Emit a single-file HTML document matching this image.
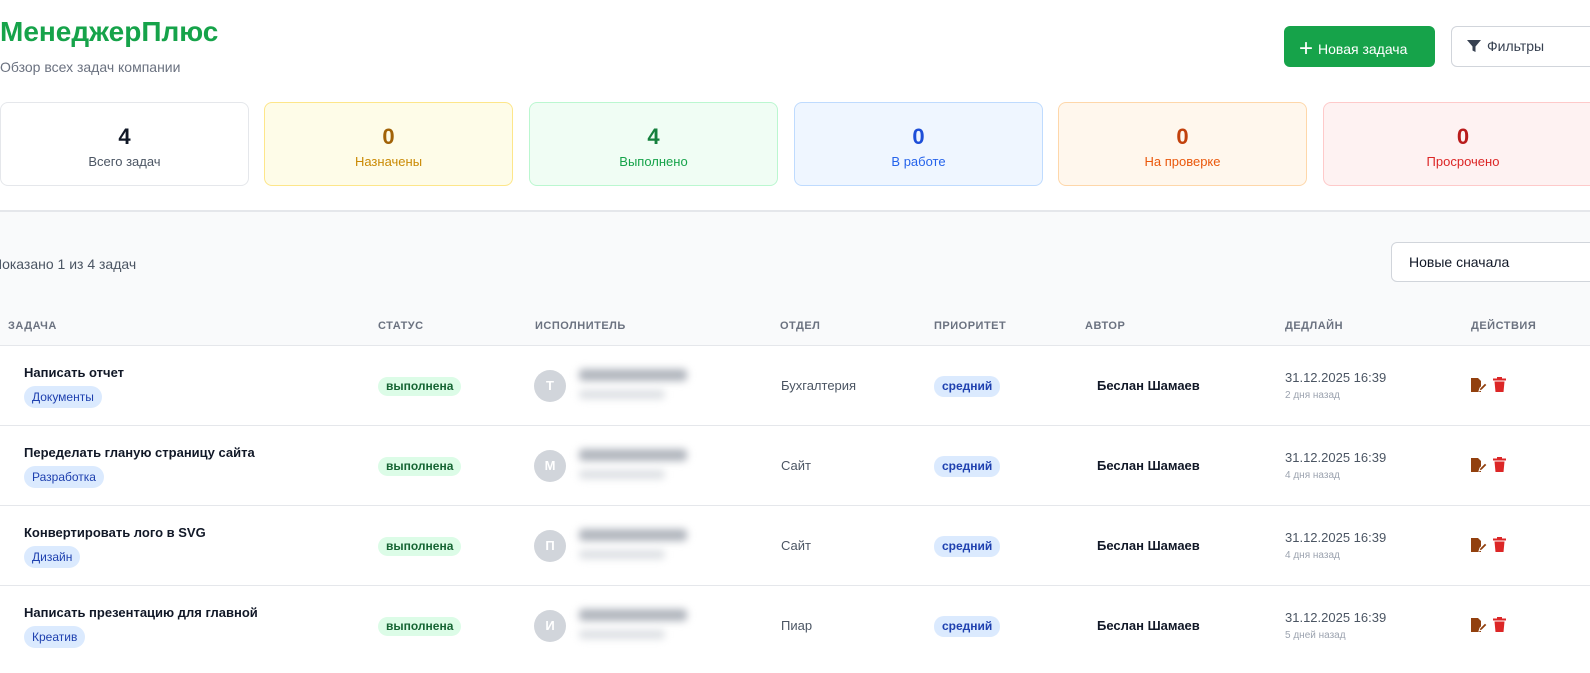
<!DOCTYPE html>
<html><head><meta charset="utf-8"><style>
*{box-sizing:border-box;margin:0;padding:0}
body{width:1590px;height:673px;overflow:hidden;background:#fff;font-family:"Liberation Sans","Noto Sans CJK SC",sans-serif;position:relative;color:#111827}
.a{position:absolute;white-space:nowrap}
.card{position:absolute;top:102px;width:249px;height:84px;border:1px solid #e5e7eb;border-radius:8px;text-align:center}
.card b{display:block;margin-top:21px;font-size:22px;line-height:26px}
.card span{display:block;font-size:13px;margin-top:4px}
.th{position:absolute;top:320px;font-size:11px;font-weight:bold;color:#6b7280;letter-spacing:.5px}
.pill{position:absolute;height:19px;line-height:19px;border-radius:10px;font-size:12px;font-weight:bold;padding:0 8px}
.tag{position:absolute;height:22px;line-height:22px;border-radius:11px;font-size:12px;padding:0 8px;background:#dbeafe;color:#1e40af}
</style></head><body>
<div class="a" style="left:0;top:16px;font-size:28px;font-weight:bold;color:#16a34a">МенеджерПлюс</div>
<div class="a" style="left:0;top:59px;font-size:14px;color:#6b7280">Обзор всех задач компании</div>
<div class="a" style="left:1284px;top:26px;width:151px;height:41px;background:#16a34a;border-radius:6px;color:#fff;font-size:14px;line-height:41px;padding-left:15px"><span style="font-size:24px;position:relative;top:2px;margin-right:5px">+</span>Новая задача</div>
<div class="a" style="left:1451px;top:26px;width:150px;height:41px;border:1px solid #d1d5db;border-radius:6px;font-size:14px;line-height:39px;padding-left:15px;color:#374151"><svg width="14" height="14" viewBox="0 0 14 14" style="vertical-align:-2px;margin-right:6px"><path d="M0 1h14L8.5 7.5V13l-3-1.5V7.5z" fill="#374151"/></svg>Фильтры</div>

<div class="card" style="left:0"><b style="color:#111827">4</b><span style="color:#4b5563">Всего задач</span></div>
<div class="card" style="left:264px;background:#fefce8;border-color:#fde68a"><b style="color:#a16207">0</b><span style="color:#ca8a04">Назначены</span></div>
<div class="card" style="left:529px;background:#f0fdf4;border-color:#bbf7d0"><b style="color:#15803d">4</b><span style="color:#16a34a">Выполнено</span></div>
<div class="card" style="left:794px;background:#eff6ff;border-color:#bfdbfe"><b style="color:#1d4ed8">0</b><span style="color:#2563eb">В работе</span></div>
<div class="card" style="left:1058px;background:#fff7ed;border-color:#fed7aa"><b style="color:#c2410c">0</b><span style="color:#ea580c">На проверке</span></div>
<div class="card" style="left:1323px;background:#fef2f2;border-color:#fecaca;width:280px"><b style="color:#b91c1c">0</b><span style="color:#dc2626">Просрочено</span></div>

<div class="a" style="left:0;top:210px;width:1590px;height:136px;background:#f9fafb;border-top:2px solid #e5e7eb;border-bottom:1px solid #e5e7eb"></div>
<div class="a" style="left:-8px;top:256px;font-size:14px;color:#4b5563">Показано 1 из 4 задач</div>
<div class="a" style="left:1391px;top:242px;width:220px;height:40px;background:#fff;border:1px solid #d1d5db;border-radius:6px;font-size:14px;line-height:38px;padding-left:17px">Новые сначала</div>

<div class="th" style="left:8px">ЗАДАЧА</div>
<div class="th" style="left:378px">СТАТУС</div>
<div class="th" style="left:535px">ИСПОЛНИТЕЛЬ</div>
<div class="th" style="left:780px">ОТДЕЛ</div>
<div class="th" style="left:934px">ПРИОРИТЕТ</div>
<div class="th" style="left:1085px">АВТОР</div>
<div class="th" style="left:1285px">ДЕДЛАЙН</div>
<div class="th" style="left:1471px">ДЕЙСТВИЯ</div>

<div id="rows"></div>
<script>
var d=[["Написать отчет","Документы","Т","Бухгалтерия","2 дня назад"],["Переделать гланую страницу сайта","Разработка","М","Сайт","4 дня назад"],["Конвертировать лого в SVG","Дизайн","П","Сайт","4 дня назад"],["Написать презентацию для главной","Креатив","И","Пиар","5 дней назад"]];
var h="";
d.forEach(function(r,i){var t=345+i*80;
if(i>0)h+='<div class="a" style="left:0;top:'+t+'px;width:1590px;height:1px;background:#e5e7eb"></div>';
h+='<div class="a" style="left:24px;top:'+(t+20)+'px;font-size:13px;font-weight:bold">'+r[0]+'</div>';
h+='<div class="tag" style="left:24px;top:'+(t+41)+'px">'+r[1]+'</div>';
h+='<div class="pill" style="left:378px;top:'+(t+32)+'px;background:#dcfce7;color:#166534">выполнена</div>';
h+='<div class="a" style="left:534px;top:'+(t+25)+'px;width:32px;height:32px;border-radius:50%;background:#d1d5db;color:#fff;font-size:13px;text-align:center;line-height:32px;font-weight:bold">'+r[2]+'</div>';
h+='<div class="a" style="left:579px;top:'+(t+24)+'px;width:108px;height:12px;background:#b0b5bd;filter:blur(4px);border-radius:4px"></div>';
h+='<div class="a" style="left:579px;top:'+(t+45)+'px;width:86px;height:9px;background:#dcdfe3;filter:blur(4px);border-radius:4px"></div>';
h+='<div class="a" style="left:781px;top:'+(t+33)+'px;font-size:13px;color:#4b5563">'+r[3]+'</div>';
h+='<div class="pill" style="left:934px;top:'+(t+31)+'px;background:#dbeafe;color:#1e40af;height:21px;line-height:21px">средний</div>';
h+='<div class="a" style="left:1097px;top:'+(t+33)+'px;font-size:13px;font-weight:bold">Беслан Шамаев</div>';
h+='<div class="a" style="left:1285px;top:'+(t+25)+'px;font-size:13px;color:#4b5563">31.12.2025 16:39</div>';
h+='<div class="a" style="left:1285px;top:'+(t+45)+'px;font-size:10px;color:#9ca3af">'+r[4]+'</div>';
h+='<svg class="a" style="left:1470px;top:'+(t+32)+'px" width="17" height="16" viewBox="0 0 17 16"><path d="M1 1h7l3 3v11H1z" fill="#92400e"/><path d="M9 14l1-3 5-5 2 2-5 5z" fill="#92400e" stroke="#fff" stroke-width="1"/></svg>';
h+='<svg class="a" style="left:1493px;top:'+(t+32)+'px" width="13" height="15" viewBox="0 0 13 15"><rect x="0" y="1.5" width="13" height="2" fill="#dc2626"/><rect x="4" y="0" width="5" height="2" fill="#dc2626"/><path d="M1.5 4.5h10l-1 10.5h-8z" fill="#dc2626"/></svg>';
});
document.getElementById("rows").innerHTML=h;
</script>
</body></html>
